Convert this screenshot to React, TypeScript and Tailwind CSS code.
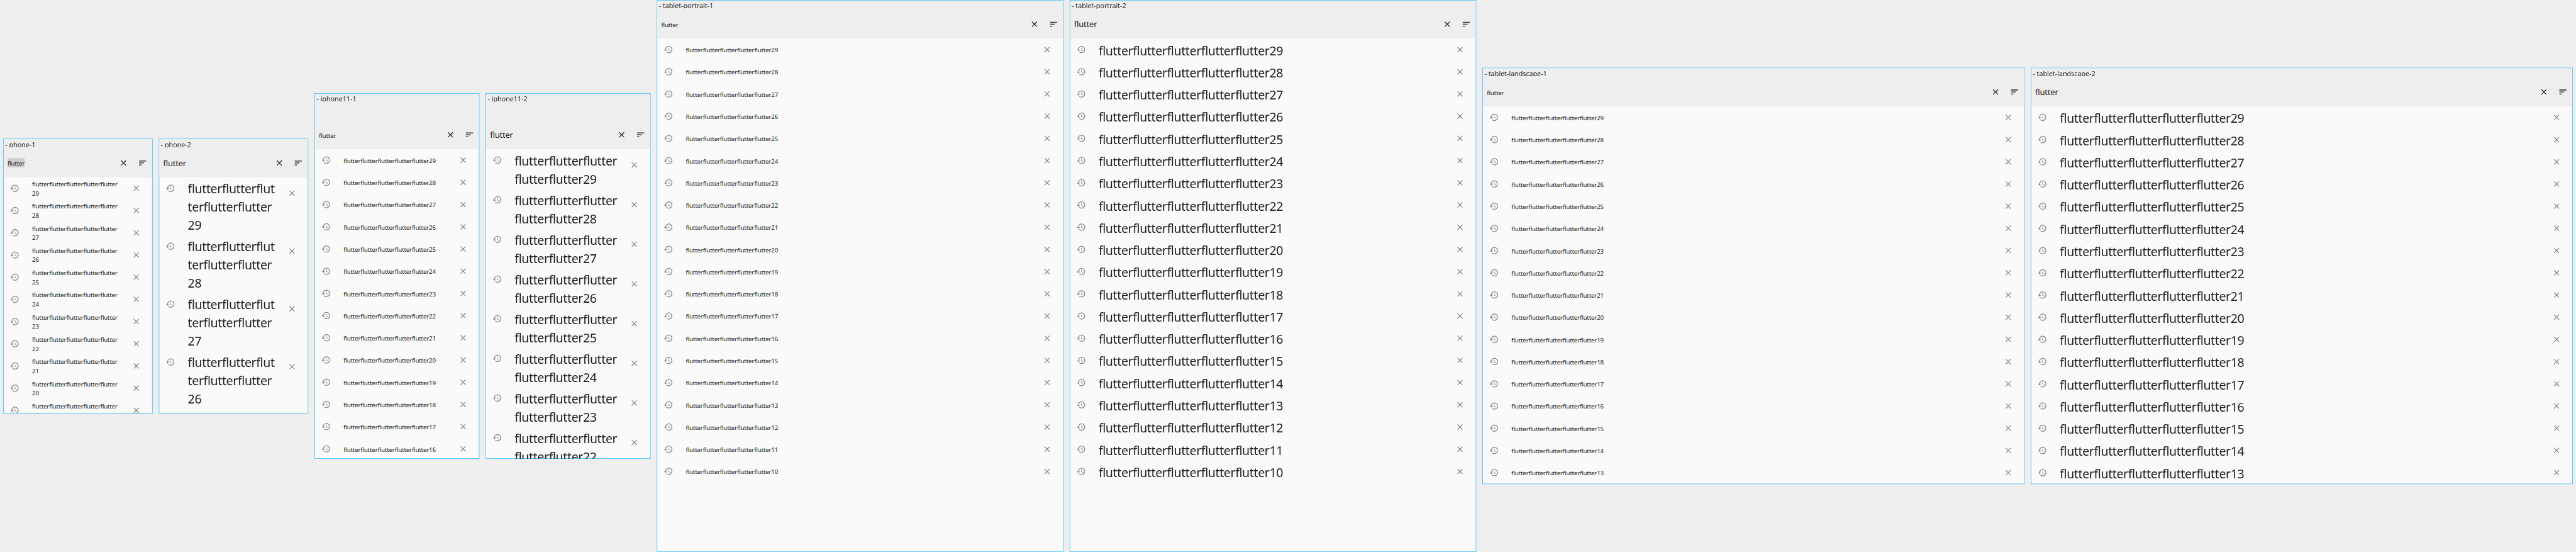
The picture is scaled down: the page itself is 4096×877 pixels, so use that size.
type Size = "normal" | "large";

interface Device {
  name: string;
  frame: string;
  size: Size;
  statusBar?: boolean;
  hairline?: boolean;
  selected?: boolean;
  rows: number;
  lines: (n: number) => string[];
}

const WORD = "flutter";
const PHRASE = WORD.repeat(5);
const oneLine = (n: number) => [`${PHRASE}${n}`];

const devices: Device[] = [
  { name: "phone-1", frame: "w-[377px] h-[693px]", size: "normal", hairline: true, selected: true, rows: 11, lines: (n) => [PHRASE, `${n}`] },
  { name: "phone-2", frame: "w-[377px] h-[693px]", size: "large", hairline: true, rows: 4, lines: (n) => ["flutterflutterflut", "terflutterflutter", `${n}`] },
  { name: "iphone11-1", frame: "w-[416px] h-[922px]", size: "normal", statusBar: true, rows: 14, lines: oneLine },
  { name: "iphone11-2", frame: "w-[416px] h-[922px]", size: "large", statusBar: true, rows: 8, lines: (n) => ["flutterflutterflutter", `flutterflutter${n}`] },
  { name: "tablet-portrait-1", frame: "w-[1026px] h-[1392px]", size: "normal", rows: 20, lines: oneLine },
  { name: "tablet-portrait-2", frame: "w-[1026px] h-[1392px]", size: "large", rows: 20, lines: oneLine },
  { name: "tablet-landscape-1", frame: "w-[1368px] h-[1050px]", size: "normal", rows: 17, lines: oneLine },
  { name: "tablet-landscape-2", frame: "w-[1368px] h-[1050px]", size: "large", rows: 17, lines: oneLine },
];

function Icon({ path, className }: { path: string; className: string }) {
  return (
    <svg viewBox="0 0 24 24" className={`size-6 shrink-0 ${className}`} fill="currentColor">
      <path d={path} />
    </svg>
  );
}

const CLOSE = "M19 6.41L17.59 5 12 10.59 6.41 5 5 6.41 10.59 12 5 17.59 6.41 19 12 13.41 17.59 19 19 17.59 13.41 12z";
const SORT = "M3 18h6v-2H3v2zM3 6v2h18V6H3zm0 7h12v-2H3v2z";
const HISTORY =
  "M13 3c-4.97 0-9 4.03-9 9H1l3.89 3.89.07.14L9 12H6c0-3.87 3.13-7 7-7s7 3.13 7 7-3.13 7-7 7c-1.93 0-3.68-.79-4.94-2.06l-1.42 1.42C8.27 19.99 10.51 21 13 21c4.97 0 9-4.03 9-9s-4.03-9-9-9zm-1 5v5l4.28 2.54.72-1.21-3.5-2.08V8H12z";

function AppBar({ device }: { device: Device }) {
  const large = device.size === "large";
  return (
    <div className="flex h-[72px] shrink-0 items-center bg-[#eeeeee] pl-[10px]">
      <div className="flex flex-1">
        <span
          className={
            large
              ? "pt-[1.5px] text-[20.8px] leading-[29px] tracking-[-0.4px]"
              : `mb-px block h-[23px] text-[15.5px] leading-[26px] tracking-[-0.3px] ${device.selected ? "bg-[#cdcdcd]" : ""}`
          }
        >
          {WORD}
        </span>
      </div>
      <button className="flex size-12 items-center justify-center">
        <Icon path={CLOSE} className="text-[#202020]" />
      </button>
      <button className="flex size-12 items-center justify-center">
        <Icon path={SORT} className="text-[#202020]" />
      </button>
    </div>
  );
}

function Row({ device, n }: { device: Device; n: number }) {
  const lines = device.lines(n);
  const large = device.size === "large";
  const tall = large && lines.length > 1;
  return (
    <li className="flex min-h-14 shrink-0 items-start pr-4 pl-4">
      <Icon path={HISTORY} className="mt-4 mr-8 text-[#898989]" />
      <div
        className={`flex min-h-14 flex-1 flex-col justify-center whitespace-nowrap ${
          large
            ? "pt-[6px] pb-[2px] text-[31px] leading-[46px] tracking-[-0.61px]"
            : "pt-[3px] text-[15.5px] leading-[23px] tracking-[-0.3px]"
        }`}
      >
        {lines.map((line) => (
          <span key={line}>{line}</span>
        ))}
      </div>
      <button className={`flex size-12 items-center justify-center ${tall ? "mt-4" : "mt-1"}`}>
        <Icon path={CLOSE} className="text-[#898989]" />
      </button>
    </li>
  );
}

function DeviceFrame({ device }: { device: Device }) {
  return (
    <section className={`flex shrink-0 flex-col overflow-hidden border border-[#03a9f4] bg-[#fafafa] ${device.frame}`}>
      <div className="h-6 shrink-0 bg-[#eeeeee] px-1 pt-1">
        <div className="h-4 overflow-hidden pt-px text-[17px] leading-[17px] whitespace-nowrap">- {device.name}</div>
      </div>
      {device.hairline && <div className="-mb-px h-px shrink-0 bg-[#f5f5f5]" />}
      {device.statusBar && <div className="h-11 shrink-0 bg-[#eeeeee]" />}
      <AppBar device={device} />
      <ul className="flex flex-1 flex-col overflow-hidden">
        {Array.from({ length: device.rows }, (_, i) => (
          <Row key={i} device={device} n={29 - i} />
        ))}
      </ul>
    </section>
  );
}

export default function App() {
  return (
    <div className="h-[877px] w-[4096px] overflow-hidden bg-[#eeeeee]">
      <main className="flex h-[1392px] w-[6502px] origin-top-left scale-[0.62996] items-center gap-4 px-2 font-['Noto_Sans','Noto_Sans_CJK_SC',sans-serif] text-[#202020]">
        {devices.map((device) => (
          <DeviceFrame key={device.name} device={device} />
        ))}
      </main>
    </div>
  );
}
